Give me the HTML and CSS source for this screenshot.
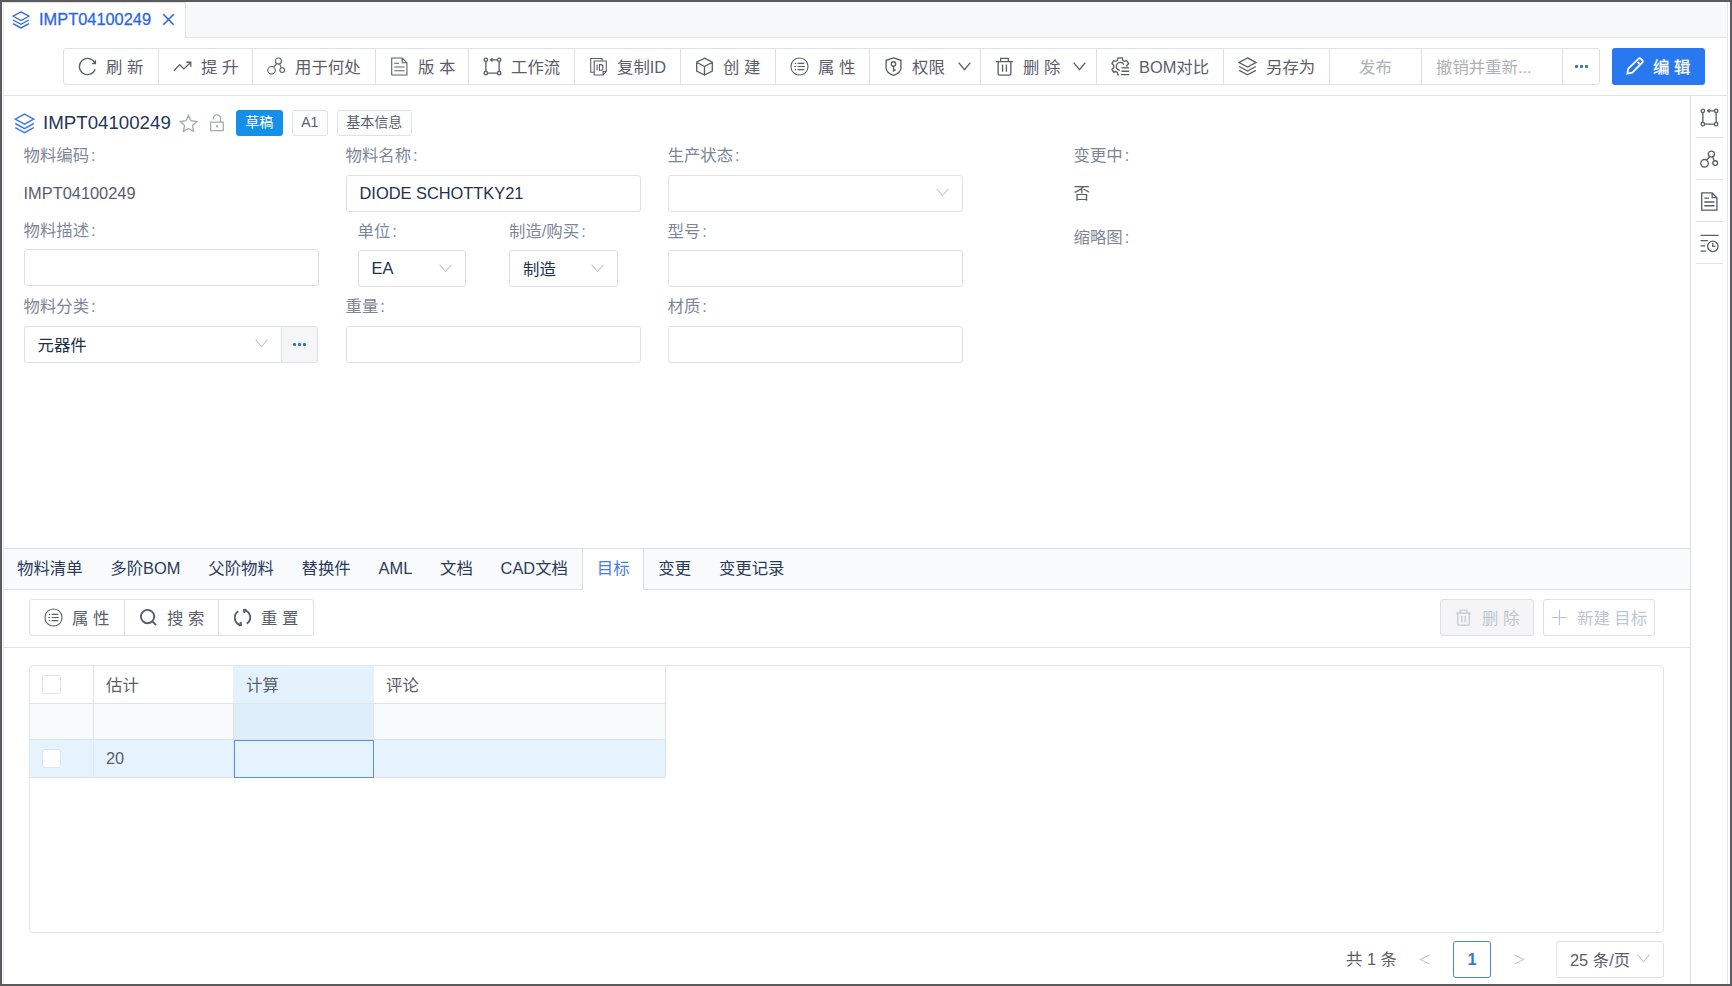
FILE: index.html
```html
<!DOCTYPE html>
<html lang="zh-CN">
<head>
    <meta charset="UTF-8">
    <meta name="viewport" content="width=device-width, initial-scale=1.0">
    <title>IMPT04100249</title>
    <link rel="stylesheet" href="styles.css">
</head>
<body>
    <!-- 图标 -->
    <svg class="sprite">
        <symbol id="i-layers" viewBox="0 0 20 20"><path d="M10 1 18.800 5.800 10 10.600 1.200 5.800zM1.200 10 10 14.800l8.800-4.800M1.200 14 10 18.800l8.800-4.800"/></symbol>
        <symbol id="i-refresh" viewBox="0 0 20 20"><path d="M18 12.800A8.500 8.500 0 1 1 17.600 6.300M18.300 3.300v3.600h-3.600"/></symbol>
        <symbol id="i-rise" viewBox="0 0 20 20"><path d="M1 14.500 7 8l4.500 4.500L18.300 6M14 5.500h4.700v4.700"/></symbol>
        <symbol id="i-where" viewBox="0 0 20 20"><circle cx="4.800" cy="14" r="4"/><circle cx="12" cy="4.300" r="3.200"/><circle cx="16" cy="13.800" r="2.500"/><path d="M7.200 10.700 10.200 7M13.300 7.300l1.700 4"/></symbol>
        <symbol id="i-doc" viewBox="0 0 20 20"><path d="M1.800 1h11L17.800 6v13h-16zM12.800 1v5h5M4.500 6.500h5M4.500 10.500h10.800M4.500 14.500h10.800"/></symbol>
        <symbol id="i-flow" viewBox="0 0 20 20"><circle cx="3" cy="3" r="1.800"/><circle cx="17" cy="3" r="1.800"/><circle cx="3" cy="17" r="1.800"/><circle cx="17" cy="17" r="1.800"/><path d="M3 4.800v10.400M17 4.800v10.400M4.800 17h10.400M15.200 3H8M10 1.200 8 3l2 1.800"/></symbol>
        <symbol id="i-copy" viewBox="0 0 20 20"><path d="M5.500 16H1.800V1.500h12V4M5.500 4.200h12.700v11L14.800 19H5.500zM8.500 8v6M11 8v6h1.500a2.200 2.200 0 0 0 2.200-2.200v-1.600A2.200 2.200 0 0 0 12.500 8zM14.800 19v-3.800h3.400"/></symbol>
        <symbol id="i-cube" viewBox="0 0 20 20"><path d="M10 1.200 18.200 5.500v9.300L10 19l-8.200-4.200V5.500zM1.800 5.500 10 10l8.200-4.500M10 10v9"/></symbol>
        <symbol id="i-list" viewBox="0 0 20 20"><circle cx="10" cy="10" r="9"/><path d="M8 6.700h7M8 10h7.500M8 13.300h7M5 6.700h1.500M4.500 10h2M5 13.300h1.500"/></symbol>
        <symbol id="i-shield" viewBox="0 0 20 20"><path d="M10 1 17.800 3.500v8c0 3.500-3 6-7.800 7.800C5.200 17.500 2.200 15 2.200 11.500v-8zM10 9.500v6M10 13.700h2.300"/><circle cx="10" cy="7.300" r="2.300"/></symbol>
        <symbol id="i-trash" viewBox="0 0 20 20"><path d="M1 4.800h18M6 4.800V1.500h8v3.300M3.300 4.800v12.700q0 1.500 1.500 1.500h10.400q1.500 0 1.500-1.500V4.800M8 8v7.500M12 8v7.500"/></symbol>
        <symbol id="i-compare" viewBox="0 0 20 20"><path d="M8.500 18.800H7.300l-.6-2.500-1.700-1-2.300.7L1 13l1.800-1.800V8.600L1 6.900l1.700-3 2.400.7 1.700-1L7.400 1h4.500l.6 2.600 1.700 1 2.400-.7 2 3-1.800 1.700v1.600M9.300 14a4.200 4.200 0 1 1 4.200-6M11 11.500h8M11 15h8M10.500 18.500H19"/></symbol>
        <symbol id="i-edit" viewBox="0 0 20 20"><path d="M1.500 18.500l1-5.500L13.800 2q1.400-1.200 2.700 0l1.500 1.500q1.300 1.400 0 2.700L7 17.300zM12.800 5.500 15 7.500"/></symbol>
        <symbol id="i-history" viewBox="0 0 20 20"><path d="M.5 1.500h19M.5 7h8M.5 12.500h5M.5 18h6M13.500 9.500V13h2.800"/><circle cx="13.500" cy="13" r="5.500"/></symbol>
        <symbol id="i-search" viewBox="0 0 20 20"><circle cx="9" cy="9" r="7"/><path d="M14 14l4 4"/></symbol>
        <symbol id="i-reset" viewBox="0 0 20 20"><path d="M7.800 17.800A8 8 0 0 1 5.500 3.400M12.200 2.200A8 8 0 0 1 14.500 16.600M5.800 18.200l2.600-.2-.4-3.300M14.200 1.800l-2.600.2.400 3.300"/></symbol>
        <symbol id="i-star" viewBox="0 0 20 20"><path d="M10 1.500l2.600 5.600 6 .8-4.400 4.200 1.100 6.100L10 15.300l-5.300 2.900 1.100-6.100L1.400 7.900l6-.8z"/></symbol>
        <symbol id="i-lock" viewBox="0 0 20 20"><path d="M3 9h14v9.500H3zM6 6V5a4 4 0 0 1 8 0v4M10 12.300v2.700M8.800 13.700h2.400"/></symbol>
        <symbol id="i-down" viewBox="0 0 20 20"><path d="M1 4l9 11 9-11"/></symbol>
        <symbol id="i-left" viewBox="0 0 20 20"><path d="M19 2 2 10l17 8"/></symbol>
        <symbol id="i-right" viewBox="0 0 20 20"><path d="M1 2l17 8-17 8"/></symbol>
        <symbol id="i-close" viewBox="0 0 20 20"><path d="M2 2l16 16M18 2 2 18"/></symbol>
        <symbol id="i-plus" viewBox="0 0 20 20"><path d="M10 1v18M1 10h18"/></symbol>
    </svg>

    <div class="page">
        <!-- 顶部标签页 -->
        <div class="top-tabs">
            <div class="top-tab">
                <svg class="icon tab-icon"><use href="#i-layers"/></svg>
                <span>IMPT04100249</span>
                <svg class="icon close"><use href="#i-close"/></svg>
            </div>
        </div>

        <!-- 工具栏 -->
        <div class="toolbar">
            <div class="btn-group main-group">
                <button class="btn"><svg class="icon"><use href="#i-refresh"/></svg>刷 新</button>
                <button class="btn"><svg class="icon"><use href="#i-rise"/></svg>提 升</button>
                <button class="btn"><svg class="icon light"><use href="#i-where"/></svg>用于何处</button>
                <button class="btn"><svg class="icon light"><use href="#i-doc"/></svg>版 本</button>
                <button class="btn"><svg class="icon"><use href="#i-flow"/></svg>工作流</button>
                <button class="btn"><svg class="icon light"><use href="#i-copy"/></svg>复制ID</button>
                <button class="btn"><svg class="icon"><use href="#i-cube"/></svg>创 建</button>
                <button class="btn"><svg class="icon light"><use href="#i-list"/></svg>属 性</button>
                <button class="btn"><svg class="icon"><use href="#i-shield"/></svg>权限<svg class="icon arrow"><use href="#i-down"/></svg></button>
                <button class="btn"><svg class="icon"><use href="#i-trash"/></svg>删 除<svg class="icon arrow"><use href="#i-down"/></svg></button>
                <button class="btn"><svg class="icon"><use href="#i-compare"/></svg>BOM对比</button>
                <button class="btn"><svg class="icon"><use href="#i-layers"/></svg>另存为</button>
                <button class="btn off center">发布</button>
                <button class="btn off">撤销并重新...</button>
                <button class="btn center"><span class="dots"><i></i><i></i><i></i></span></button>
            </div>
            <button class="btn-edit"><svg class="icon"><use href="#i-edit"/></svg>编 辑</button>
        </div>

        <div class="body">
            <div class="main">
                <div class="detail">
                    <div class="title-row">
                        <svg class="icon title-icon"><use href="#i-layers"/></svg>
                        <span class="title">IMPT04100249</span>
                        <svg class="icon star"><use href="#i-star"/></svg>
                        <svg class="icon lock"><use href="#i-lock"/></svg>
                        <span class="tag tag-blue">草稿</span>
                        <span class="tag tag-rev">A1</span>
                        <span class="tag tag-info">基本信息</span>
                    </div>

                    <div class="form">
                        <div class="col">
                            <label>物料编码<b>:</b></label>
                            <div class="value">IMPT04100249</div>
                            <label class="short">物料描述<b>:</b></label>
                            <div class="input"></div>
                            <label class="tall">物料分类<b>:</b></label>
                            <div class="input-addon">
                                <div class="input select">元器件<svg class="icon caret"><use href="#i-down"/></svg></div>
                                <div class="addon"><span class="dots"><i></i><i></i><i></i></span></div>
                            </div>
                        </div>
                        <div class="col">
                            <label>物料名称<b>:</b></label>
                            <div class="input">DIODE SCHOTTKY21</div>
                            <div class="pair">
                                <div class="pair-item">
                                    <label>单位<b>:</b></label>
                                    <div class="input select">EA<svg class="icon caret"><use href="#i-down"/></svg></div>
                                </div>
                                <div class="pair-item">
                                    <label>制造/购买<b>:</b></label>
                                    <div class="input select">制造<svg class="icon caret"><use href="#i-down"/></svg></div>
                                </div>
                            </div>
                            <label>重量<b>:</b></label>
                            <div class="input"></div>
                        </div>
                        <div class="col">
                            <label>生产状态<b>:</b></label>
                            <div class="input select"><svg class="icon caret"><use href="#i-down"/></svg></div>
                            <label>型号<b>:</b></label>
                            <div class="input"></div>
                            <label>材质<b>:</b></label>
                            <div class="input"></div>
                        </div>
                        <div class="col col-last">
                            <label>变更中<b>:</b></label>
                            <div class="value">否</div>
                            <label class="thumb">缩略图<b>:</b></label>
                        </div>
                    </div>
                </div>

                <!-- 关系页签 -->
                <div class="rel-tabs">
                    <div class="rel-tab">物料清单</div>
                    <div class="rel-tab">多阶BOM</div>
                    <div class="rel-tab">父阶物料</div>
                    <div class="rel-tab">替换件</div>
                    <div class="rel-tab">AML</div>
                    <div class="rel-tab">文档</div>
                    <div class="rel-tab">CAD文档</div>
                    <div class="rel-tab active">目标</div>
                    <div class="rel-tab">变更</div>
                    <div class="rel-tab">变更记录</div>
                </div>

                <div class="sub-toolbar">
                    <div class="btn-group sub-group">
                        <button class="btn"><svg class="icon light"><use href="#i-list"/></svg>属 性</button>
                        <button class="btn"><svg class="icon bold"><use href="#i-search"/></svg>搜 索</button>
                        <button class="btn"><svg class="icon bold"><use href="#i-reset"/></svg>重 置</button>
                    </div>
                    <div class="sub-right">
                        <button class="btn-off btn-del"><svg class="icon"><use href="#i-trash"/></svg>删 除</button>
                        <button class="btn-off btn-new"><svg class="icon"><use href="#i-plus"/></svg>新建 目标</button>
                    </div>
                </div>

                <!-- 表格 -->
                <div class="grid-box">
                    <div class="grid">
                        <div class="cell head"><span class="check"></span></div>
                        <div class="cell head">估计</div>
                        <div class="cell head hot">计算</div>
                        <div class="cell head">评论</div>
                        <div class="cell filter"></div>
                        <div class="cell filter"></div>
                        <div class="cell filter hot"></div>
                        <div class="cell filter"></div>
                        <div class="cell row"><span class="check"></span></div>
                        <div class="cell row">20</div>
                        <div class="cell row focus"></div>
                        <div class="cell row"></div>
                    </div>
                </div>

                <div class="pager">
                    <span class="total">共 1 条</span>
                    <svg class="icon nav"><use href="#i-left"/></svg>
                    <span class="page-no">1</span>
                    <svg class="icon nav"><use href="#i-right"/></svg>
                    <div class="input select page-size">25 条/页<svg class="icon caret"><use href="#i-down"/></svg></div>
                </div>
            </div>

            <!-- 右侧栏 -->
            <div class="side">
                <div class="side-item"><svg class="icon"><use href="#i-flow"/></svg></div>
                <div class="side-item"><svg class="icon"><use href="#i-where"/></svg></div>
                <div class="side-item"><svg class="icon"><use href="#i-doc"/></svg></div>
                <div class="side-item"><svg class="icon"><use href="#i-history"/></svg></div>
            </div>
        </div>
    </div>
</body>
</html>
```

FILE: styles.css
```css
* {
    box-sizing: border-box;
}

body {
    margin: 0;
    height: 986px;
    display: flex;
    padding-left: 1px;
    padding-right: 2px;
    border: 2px solid #5b5a5c;
    background: #fff;
    color: #5a5e6b;
    font-family: "Liberation Sans", "Noto Sans CJK SC", sans-serif;
    font-size: 16.4px;
    overflow: hidden;
}

button {
    font: inherit;
    color: inherit;
    padding: 0;
    border: none;
    background: none;
}

.sprite {
    display: none;
}

.icon {
    width: 19px;
    height: 19px;
    flex: none;
    fill: none;
    stroke: currentColor;
    stroke-width: 1.4;
}

.icon.light {
    stroke-width: 1.15;
}

.icon.bold {
    stroke-width: 2;
}

.page {
    flex: 1;
    display: flex;
    flex-direction: column;
    border-left: 1px solid #e6e9ec;
    border-right: 1px solid #e4e7ea;
}

/* 顶部标签页 */
.top-tabs {
    height: 36px;
    display: flex;
    background: #f7f8fb;
    border-bottom: 1px solid #e2e5e9;
}

.top-tab {
    width: 182px;
    height: 36px;
    padding: 0 0 2px 8px;
    display: flex;
    align-items: center;
    background: #fff;
    color: #2e67e0;
    border-top: 1px solid #dfe3e8;
    border-right: 1px solid #dfe3e8;
    border-top-right-radius: 3px;
    -webkit-text-stroke: 0.3px #2e67e0;
}

.top-tab .tab-icon {
    width: 18px;
    height: 18px;
    margin-right: 9px;
}

.top-tab .close {
    width: 13px;
    height: 13px;
    margin-left: 11px;
    stroke-width: 2.5;
}

/* 工具栏 */
.toolbar {
    height: 58px;
    padding: 10px 0 0 59px;
    display: flex;
    border-bottom: 1px solid #dfe3e6;
}

.btn-group {
    display: grid;
    height: 37px;
    border: 1px solid #dce0e5;
    border-radius: 3px;
}

.main-group {
    grid-template-columns: 95px 94px 123px 93px 106px 106px 95px 94px 111px 116px 127px 106px 92px 141px 36px;
    margin-right: 12px;
}

.btn {
    display: flex;
    align-items: center;
    padding: 0 0 1px 14px;
    border-right: 1px solid #dce0e5;
    white-space: pre;
}

.btn:last-child {
    border-right: none;
}

.btn .icon {
    margin-right: 9px;
}

.btn .arrow {
    width: 13px;
    height: 13px;
    margin: 0 0 0 13px;
    stroke-width: 2;
}

.btn.off {
    color: #afb1b6;
}

.btn.center {
    justify-content: center;
    padding-left: 0;
}

.dots {
    display: flex;
    gap: 2px;
}

.dots i {
    width: 3px;
    height: 3px;
    background: #3a6cc4;
    border-radius: 1px;
}

.btn-edit {
    width: 93px;
    height: 37px;
    display: flex;
    align-items: center;
    padding: 0 0 1px 14px;
    background: #2878f0;
    border-radius: 3px;
    color: #fff;
    white-space: pre;
    -webkit-text-stroke: 0.3px #fff;
}

.btn-edit .icon {
    width: 18px;
    height: 18px;
    margin-right: 9px;
    stroke-width: 2;
}

/* 主体 */
.body {
    flex: 1;
    display: flex;
}

.main {
    flex: 1;
}

.detail {
    height: 452px;
}

.title-row {
    height: 40px;
    padding: 14px 0 0 10px;
    display: flex;
    align-items: center;
}

.title-icon {
    width: 21px;
    height: 21px;
    margin-right: 8px;
    color: #3f7be6;
}

.title {
    font-size: 18.7px;
    color: #273555;
    margin-right: 8px;
}

.star {
    color: #a3a9b5;
}

.lock {
    width: 18px;
    height: 18px;
    margin: 0 10px 0 10px;
    color: #a3a9b5;
}

.tag {
    height: 26px;
    line-height: 23px;
    margin-right: 9px;
    text-align: center;
    font-size: 14px;
    border: 1px solid #e0e3e6;
    border-radius: 3px;
    background: #fcfdfd;
}

.tag-blue {
    width: 47px;
    background: #148fea;
    border-color: #148fea;
    color: #fff;
}

.tag-rev {
    width: 36px;
}

.tag-info {
    width: 75px;
}

/* 表单 */
.form {
    display: flex;
    gap: 27px;
    padding-left: 19.5px;
}

.col {
    width: 295px;
}

.col-last {
    margin-left: 84px;
}

label {
    display: block;
    height: 38.5px;
    line-height: 38px;
    color: #7e8798;
}

label b {
    font-weight: normal;
    margin-left: 2px;
}

label.short {
    height: 37px;
    line-height: 37px;
}

label.tall {
    height: 40px;
    line-height: 40px;
}

label.thumb {
    padding-top: 6px;
}

.value {
    height: 37px;
    line-height: 37px;
}

.input {
    height: 37px;
    padding: 0 13px;
    display: flex;
    align-items: center;
    color: #22304f;
    background: #fff;
    border: 1px solid #dde1e5;
    border-radius: 3px;
}

.select {
    justify-content: space-between;
    padding-bottom: 1px;
}

.caret {
    width: 13px;
    height: 13px;
    margin-left: auto;
    color: #c3c7cd;
    stroke-width: 1.6;
}

.input-addon {
    display: flex;
    width: 294px;
}

.input-addon .input {
    flex: 1;
    border-right: none;
    border-radius: 3px 0 0 3px;
}

.addon {
    width: 37px;
    display: flex;
    align-items: center;
    justify-content: center;
    background: #f5f6f8;
    border: 1px solid #dde1e5;
    border-radius: 0 3px 3px 0;
}

.pair {
    display: flex;
    gap: 43px;
    padding-left: 12px;
}

.pair-item {
    width: 108.5px;
}

/* 关系页签 */
.rel-tabs {
    height: 42px;
    display: flex;
    background: #f8fafc;
    border-top: 1px solid #dce0e4;
    border-bottom: 1px solid #dce0e4;
    color: #2b3a5a;
}

.rel-tab {
    padding: 0 13.9px;
    line-height: 39px;
}

.rel-tab:first-child {
    padding-left: 13px;
}

.rel-tab.active {
    height: 41px;
    background: #fff;
    color: #3f80ee;
    border-left: 1px solid #dce0e4;
    border-right: 1px solid #dce0e4;
}

.sub-toolbar {
    height: 58px;
    padding: 9px 35px 0 25px;
    display: flex;
    justify-content: space-between;
    border-bottom: 1px solid #dce0e4;
}

.sub-group {
    grid-template-columns: 95px 94px 94px;
}

.sub-right {
    display: flex;
    gap: 9px;
}

.btn-off {
    height: 37px;
    display: flex;
    align-items: center;
    padding-bottom: 1px;
    border: 1px solid #dce0e4;
    border-radius: 3px;
    color: #c0c5cd;
    white-space: pre;
}

.btn-del {
    width: 94px;
    padding-left: 14px;
    background: #f5f5f8;
}

.btn-del .icon {
    width: 17px;
    height: 17px;
    margin-right: 10px;
}

.btn-new {
    width: 112px;
    padding-left: 7px;
}

.btn-new .icon {
    width: 17px;
    height: 17px;
    margin-right: 9px;
}

/* 表格 */
.grid-box {
    height: 268px;
    margin: 17px 26px 8px 25px;
    border: 1px solid #e1e4e8;
    border-radius: 4px;
}

.grid {
    display: grid;
    width: 636px;
    grid-template-columns: 64px 140px 140px 292px;
    grid-template-rows: 38px 36px 38px;
}

.cell {
    display: flex;
    align-items: center;
    padding-left: 12px;
    border-right: 1px solid #dfe3e6;
    border-bottom: 1px solid #dfe3e6;
}

.head {
    padding-bottom: 1px;
}

.head.hot {
    background: #e4f2fe;
    border-right-color: #e4f2fe;
}

.head:nth-child(2) {
    border-right-color: #e4f2fe;
}

.filter {
    background: #f6fafb;
}

.filter.hot {
    background: #deeefa;
}

.row {
    background: #e5f3fe;
}

.row.focus {
    border: none;
    box-shadow: inset 0 0 0 1px #5a90ec;
}

.check {
    width: 19px;
    height: 19px;
    background: #fff;
    border: 1px solid #dfe2e6;
    border-radius: 3px;
}

/* 分页 */
.pager {
    height: 37px;
    padding-right: 26px;
    display: flex;
    align-items: center;
    justify-content: flex-end;
}

.nav {
    width: 11px;
    height: 13px;
    color: #c5c8ce;
    stroke-width: 2;
}

.total {
    margin: 0 22px 3px 0;
}

.page-no {
    width: 38px;
    height: 37px;
    line-height: 35px;
    margin: 0 23px;
    text-align: center;
    color: #2f75e6;
    font-weight: bold;
    border: 1px solid #4c86e0;
    border-radius: 3px;
}

.page-size {
    width: 108px;
    margin-left: 31px;
    padding-bottom: 2px;
    color: #5a5e6b;
}

/* 右侧栏 */
.side {
    width: 37px;
    padding-left: 5px;
    border-left: 1px solid #dcdfe4;
}

.side-item {
    width: 27px;
    height: 42px;
    padding-top: 2px;
    display: flex;
    align-items: center;
    justify-content: center;
    border-bottom: 1px solid #dce0e4;
}
```
